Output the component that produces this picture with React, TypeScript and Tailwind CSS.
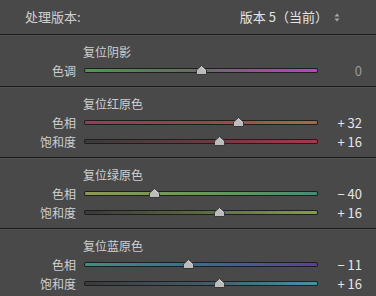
import React from "react";

type Row = { label: string; value: string; v: number; grad: string; dim?: boolean };
type Section = { title: string; rows: Row[] };

const sections: Section[] = [
  {
    title: "复位阴影",
    rows: [
      {
        label: "色调",
        value: "0",
        v: 0,
        dim: true,
        grad: "linear-gradient(to right,#4f9a4f 0%,#5a7a5a 30%,#6a6a6a 50%,#8a5a8a 70%,#b848b8 100%)",
      },
    ],
  },
  {
    title: "复位红原色",
    rows: [
      { label: "色相", value: "+ 32", v: 32, grad: "linear-gradient(to right,#8e4058 0%,#8a4a4a 50%,#9a7050 100%)" },
      { label: "饱和度", value: "+ 16", v: 16, grad: "linear-gradient(to right,#3a3a3a 0%,#6a3a40 50%,#a83848 100%)" },
    ],
  },
  {
    title: "复位绿原色",
    rows: [
      { label: "色相", value: "− 40", v: -40, grad: "linear-gradient(to right,#8c9a50 0%,#6a9a50 50%,#3f8f78 100%)" },
      { label: "饱和度", value: "+ 16", v: 16, grad: "linear-gradient(to right,#3a3a3a 0%,#5a6a40 50%,#84a040 100%)" },
    ],
  },
  {
    title: "复位蓝原色",
    rows: [
      { label: "色相", value: "− 11", v: -11, grad: "linear-gradient(to right,#3f8f80 0%,#3f6a8a 50%,#5a3f9a 100%)" },
      { label: "饱和度", value: "+ 16", v: 16, grad: "linear-gradient(to right,#3a3a3a 0%,#3f5a6a 50%,#4a90a8 100%)" },
    ],
  },
];

function Separator() {
  return (
    <div>
      <div className="h-px bg-[#1c1c1c]" />
      <div className="h-px bg-[#525252]" />
    </div>
  );
}

function Slider({ row }: { row: Row }) {
  const pos = 117 + (row.v * 117) / 100;
  return (
    <div className="relative w-[234px] h-[19px] flex items-center">
      <div className="w-full h-[5px] rounded-[2px] bg-[#1e1e1e] p-px">
        <div className="w-full h-full rounded-[1px]" style={{ background: row.grad }} />
      </div>
      <svg
        className="absolute"
        width="11"
        height="10"
        viewBox="0 0 11 10"
        style={{ left: pos - 5.5, top: 4 }}
      >
        <path d="M5.5 0.5 L10.5 5 L10.5 9.5 L0.5 9.5 L0.5 5 Z" fill="#bcbcbc" stroke="#3a3a3a" strokeWidth="1" />
        <path d="M5.5 1.8 L9.3 5.3" stroke="#e2e2e2" strokeWidth="0.8" />
      </svg>
    </div>
  );
}

export default function App() {
  return (
    <div
      className="w-[376px] h-[296px] overflow-hidden bg-[#494949] text-[12px] text-[#cfcfcf]"
      style={{ fontFamily: '"Noto Sans CJK SC", "Noto Sans", sans-serif' }}
    >
      <div className="h-[34px] flex items-center pl-[25px] pr-[36px] text-[13px]">
        <span className="text-[#cfcfcf]">处理版本:</span>
        <span className="ml-auto text-[#e4e4e4]">版本 5（当前）</span>
        <svg className="ml-[6px]" width="6" height="9" viewBox="0 0 6 9">
          <path d="M3 0.5 L5.5 3.5 L0.5 3.5 Z" fill="#a8a8a8" />
          <path d="M3 8.5 L5.5 5.5 L0.5 5.5 Z" fill="#a8a8a8" />
        </svg>
      </div>
      <Separator />
      {sections.map((s, i) => (
        <div key={i}>
          <div className="py-[6px]">
            <div className="h-[19px] flex items-center pl-[83px] text-[#cfcfcf]">{s.title}</div>
            {s.rows.map((r, j) => (
              <div key={j} className="h-[19px] flex items-center">
                <div className="w-[76px] text-right text-[#cfcfcf]">{r.label}</div>
                <div className="ml-[8px]">
                  <Slider row={r} />
                </div>
                <div
                  className={"w-[44px] text-right text-[13px] " + (r.dim ? "text-[#9a9a9a]" : "text-[#e6e6e6]")}
                >
                  {r.value}
                </div>
              </div>
            ))}
          </div>
          {i < sections.length - 1 && <Separator />}
        </div>
      ))}
    </div>
  );
}
